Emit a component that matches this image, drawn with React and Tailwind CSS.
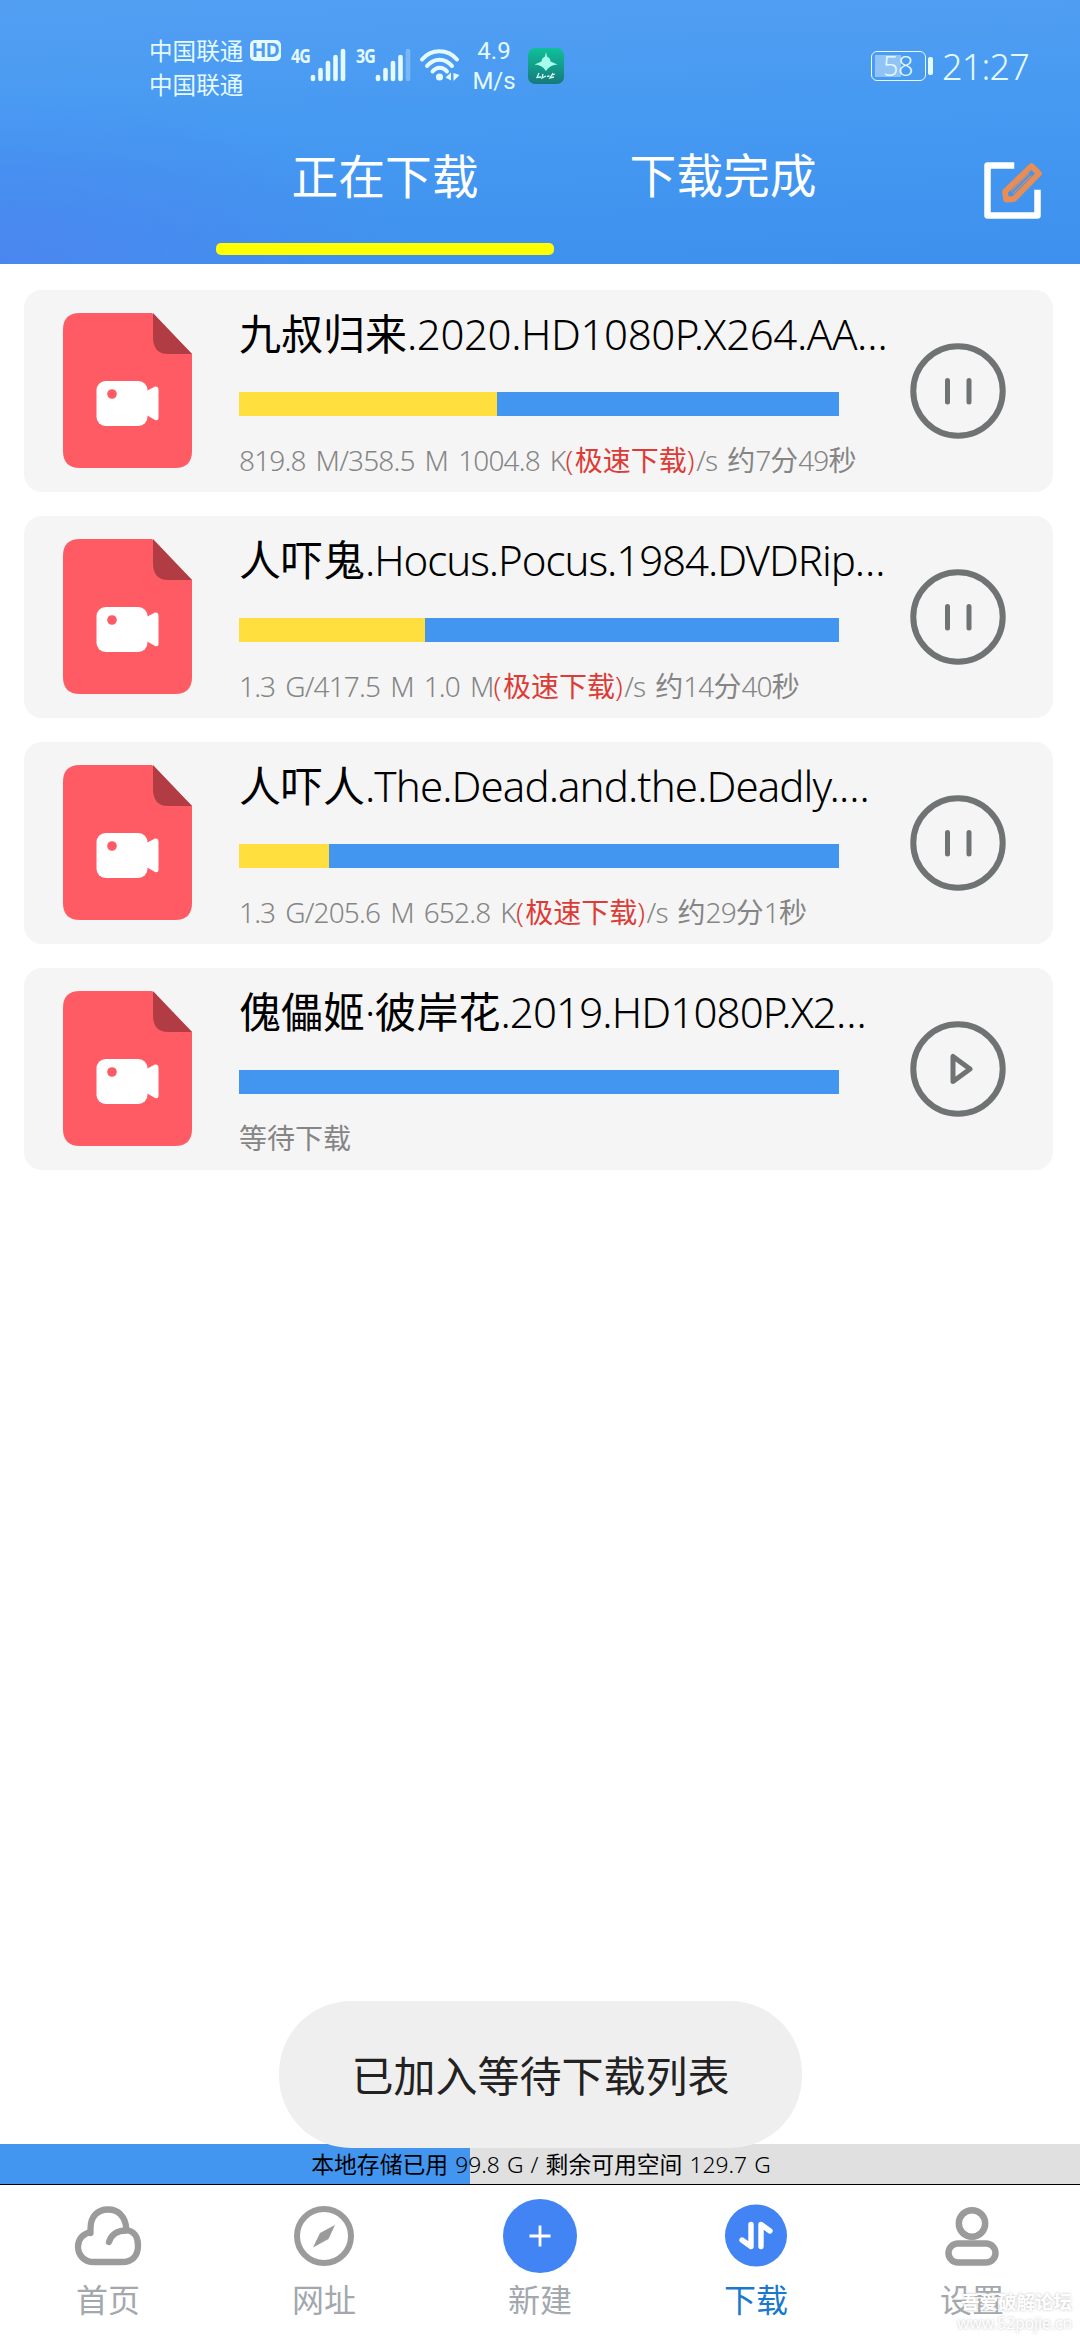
/**
 * Downloads screen
 * Active download tasks, local storage usage and the bottom navigation.
 */
import React from 'react';

const TASKS = [
    { name: '九叔归来.2020.HD1080P.X264.AA…', tracking: 'tracking-[-0.4px]', percent: 43, running: true, size: '819.8 M/358.5 M 1004.8 K', left: '/s 约7分49秒' },
    { name: '人吓鬼.Hocus.Pocus.1984.DVDRip…', tracking: 'tracking-[-1.05px]', percent: 31, running: true, size: '1.3 G/417.5 M 1.0 M', left: '/s 约14分40秒' },
    { name: '人吓人.The.Dead.and.the.Deadly.…', tracking: 'tracking-[-0.9px]', percent: 15, running: true, size: '1.3 G/205.6 M 652.8 K', left: '/s 约29分1秒' },
    { name: '傀儡姬·彼岸花.2019.HD1080P.X2…', tracking: 'tracking-[-0.85px]', percent: 0, running: false },
];

// Latin runs are set light, Chinese runs keep the regular weight
const Mixed = ({ text, className = '' }) => text.split(/([\u4e00-\u9fff]+)/).map((part, i) => (
    <span key={i} className={i % 2 ? 'font-normal' : `font-[260] ${className}`}>{part}</span>
));

const Signal = ({ label, level }) => (
    <div className="flex items-start">
        <span className="w-[19px] text-[20px] leading-[16px] font-bold tracking-tighter origin-left scale-x-[0.8] whitespace-nowrap">{label}</span>
        <svg className="w-9 h-[34px]" viewBox="0 0 36 34" stroke="currentColor" strokeWidth="4.6" strokeLinecap="round">
            {[29, 22, 15, 9, 3].map((y, i) => (
                <path key={y} d={`M${3 + i * 7.5} ${y}V31`} opacity={i < level ? 1 : 0.3} />
            ))}
        </svg>
    </div>
);

const StatusBar = () => (
    <div className="flex items-start h-[122px] pt-[34px] pl-[149px] pr-[51px] text-[#e4faff]">
        <div className="w-[101px] text-[23.6px] leading-[34px]">
            <div>中国联通</div>
            <div>中国联通</div>
        </div>
        <div className="mt-[6px] w-[31px] h-[21px] rounded-[5px] bg-[#e4faff] text-[#4d9bf2] text-[19px] leading-[21px] font-bold text-center tracking-tight">HD</div>
        <div className="mt-[14px] ml-[10px]"><Signal label="4G" level={5} /></div>
        <div className="mt-[14px] ml-[10px]"><Signal label="3G" level={4} /></div>
        <svg className="mt-[14px] ml-[8px] w-[41px] h-[35px]" viewBox="0 0 41 35" fill="none" stroke="currentColor" strokeWidth="4" strokeLinecap="round">
            <path d="M3 11.500C12 0.500 29 0.500 38 11.500" />
            <path d="M8 18C15 9.500 26 9.500 33 18" />
            <path d="M13.500 23.500C17.500 18.500 24 18.500 28 23.500" />
            <circle cx="20.500" cy="29" r="3.600" fill="currentColor" stroke="none" />
            <path d="M32 24.500V32.500L26.500 29.500ZM34.500 25V33L40.500 27Z" fill="currentColor" stroke="none" />
        </svg>
        <div className="mt-[2px] ml-[12px] w-[44px] text-center font-['Roboto'] text-[24px] leading-[30px]">
            <div>4.9</div>
            <div>M/s</div>
        </div>
        <svg className="mt-[14px] ml-[12px] w-9 h-9" viewBox="0 0 36 36">
            <defs>
                <linearGradient id="app" x1="0" y1="0" x2="0" y2="1">
                    <stop offset="0" stopColor="#0fc09a" />
                    <stop offset="1" stopColor="#157a7c" />
                </linearGradient>
            </defs>
            <rect width="36" height="36" rx="7" fill="url(#app)" />
            <path d="M18 4L19 8.500Q22.500 10 22.500 13.500L29.500 16.500Q22 16.500 18 23Q14 16.500 6.500 16.500L13.500 13.500Q13.500 10 17 8.500Z" fill="#a5ffec" />
            <path d="M11 25L9 29.500L13 29M15 26L14 30L18 28M19 28.500L21.500 28M25 25L22 30L26 29M24 27L27 26" fill="none" stroke="#d7fff5" strokeWidth="1.300" />
        </svg>
        <div className="flex-1" />
        <div className="flex items-center mt-[17px]">
            <div className="flex items-center w-[55px] h-[30px] p-[3px] rounded-[6px] border-[1.500px] border-current">
                <div className="w-[26px] h-full bg-white/40" />
                <span className="-ml-[18px] text-[27px] leading-[24px] font-light tracking-[-0.5px]">58</span>
            </div>
            <div className="ml-[2px] w-[5px] h-[18px] rounded-[2px] bg-current" />
        </div>
        <span className="mt-[8px] ml-[9px] text-[36px] leading-[50px] font-light tracking-[-0.8px]">21:27</span>
    </div>
);

const Header = () => (
    <header className="h-[264px] bg-[radial-gradient(ellipse_420px_170px_at_0%_100%,#4b86f0_0%,#4b86f000_100%),linear-gradient(178deg,#529ff3_0%,#4599f1_50%,#3d90ed_100%)]">
        <StatusBar />
        <div className="flex pl-[216px] h-[142px]">
            <div className="w-[338px] flex flex-col justify-between pb-[9px]">
                <span className="pt-[23px] text-center text-[46.8px] leading-[62px] text-white">正在下载</span>
                <div className="h-[12px] rounded-[5px] bg-[#ffff00]" />
            </div>
            <div className="w-[338px] pt-[22px] text-center text-[46.8px] leading-[62px] text-white">下载完成</div>
            <svg className="mt-[39px] ml-[90px] w-[60px] h-[60px]" viewBox="0 0 60 60" fill="none">
                <path d="M29 4.500H5.500V54.500H55.500V32" stroke="#fff" strokeWidth="6.500" strokeLinejoin="round" strokeLinecap="square" />
                <path d="M49.500 5L57 12.500L32 38L24 38.500L23 30.500Z" stroke="#e78d55" strokeWidth="5.800" strokeLinejoin="round" />
                <path d="M48 13.500L30 31.500" stroke="#e78d55" strokeWidth="4" />
                <path d="M48.500 13L28.500 33" stroke="#4a93e6" strokeWidth="2" strokeLinecap="round" />
            </svg>
        </div>
    </header>
);

const VideoFileIcon = () => (
    <svg className="w-[129px] h-[155px]" viewBox="0 0 129 155">
        <path d="M17 0H89L129 41V138Q129 155 112 155H17Q0 155 0 138V17Q0 0 17 0Z" fill="#ff5b64" />
        <path d="M90 0L129 41H105Q90 41 90 24Z" fill="#b23c43" />
        <rect x="33.500" y="68" width="51" height="45" rx="9" fill="#fff" />
        <path d="M83.500 78L92 73.500Q95.500 73 95.500 77V105Q95.500 108 92 107L83.500 102Z" fill="#fff" />
        <circle cx="49" cy="81" r="4.800" fill="#ff5b64" />
    </svg>
);

const ToggleIcon = ({ running }) => (
    <svg className="w-24 h-24" viewBox="0 0 96 96" fill="none" stroke="#707374" strokeLinecap="round" strokeLinejoin="round">
        <circle cx="48" cy="48" r="44.700" strokeWidth="6" />
        {running
            ? <path d="M37.500 37.500V59M59 37.500V59" strokeWidth="5" />
            : <path d="M43 35.500V60.500L60 48Z" strokeWidth="5" />}
    </svg>
);

const TaskCard = ({ task }) => (
    <div className="flex h-[202px] pl-[38.5px] rounded-[18px] bg-[#f5f5f5]">
        <div className="w-[176.5px] pt-[23px]"><VideoFileIcon /></div>
        <div className="w-[671px] pt-[12px] whitespace-nowrap">
            <div className="text-[42px] leading-[64px] text-black"><Mixed text={task.name} className={task.tracking} /></div>
            <div className="mt-[26px] w-[600px] h-[24px] bg-[#4396ef]">
                <div className="h-full bg-[#ffdf3e]" style={{ width: `${task.percent}%` }} />
            </div>
            <div className="mt-[24px] text-[28px] leading-[40px] text-[#858585] [word-spacing:3.6px]">
                {task.size ? (
                    <>
                        <Mixed text={task.size} className="tracking-[-0.85px]" />
                        <span className="text-[#dc3c35]"><Mixed text="(极速下载)" className="tracking-[1.5px]" /></span>
                        <Mixed text={task.left} className="tracking-[-0.9px]" />
                    </>
                ) : '等待下载'}
            </div>
        </div>
        <button className="self-start mt-[53px]"><ToggleIcon running={task.running} /></button>
    </div>
);

const StorageBar = () => (
    <div className="relative h-[41px] bg-[#e0e0e0] border-b-[1px] border-black">
        <div className="w-[470px] h-full bg-[#4396ef]" />
        <div className="absolute inset-0 pl-[2px] text-center text-[22.8px] leading-[41px] text-black [word-spacing:1.2px]">
            <Mixed text="本地存储已用 99.8 G / 剩余可用空间 129.7 G" />
        </div>
    </div>
);

const NAV = [
    {
        label: '首页',
        icon: (
            <g fill="none" stroke="#9b9b9b" strokeWidth="6.300" strokeLinecap="round" strokeLinejoin="round">
                <path d="M19.500 34V29.500C19.500 17 27 10.500 37 10.500S54.500 17 55.500 31C63 32 67 38 67 46.500C67 57 61 63 51 63H23C13 63 7 56 7 47.500C7 40 12 35 19.500 33" />
                <path d="M38 43C40 36 46 31.500 55 31.500" />
            </g>
        ),
    },
    {
        label: '网址',
        icon: (
            <g>
                <circle cx="37" cy="37" r="27" fill="none" stroke="#9b9b9b" strokeWidth="6" />
                <path d="M48 26L41.500 40L26 48.500L33 34Z" fill="#9b9b9b" />
            </g>
        ),
    },
    {
        label: '新建',
        icon: (
            <g>
                <circle cx="37" cy="37" r="37" fill="#4284f3" />
                <path d="M37 26.500V47.500M26.500 37H47.500" stroke="#fff" strokeWidth="2.800" />
            </g>
        ),
    },
    {
        label: '下载',
        active: true,
        icon: (
            <g>
                <circle cx="37" cy="36.500" r="31" fill="#4284f3" />
                <path d="M32 25.500V47.500L23 41M42 47.500V25.500L51 32" fill="none" stroke="#fff" strokeWidth="5.400" strokeLinecap="round" strokeLinejoin="round" />
            </g>
        ),
    },
    {
        label: '设置',
        icon: (
            <g fill="none" stroke="#9b9b9b" strokeWidth="6.500">
                <circle cx="37" cy="24.500" r="13.200" />
                <rect x="13.500" y="44.500" width="47" height="19" rx="9.500" />
            </g>
        ),
    },
];

const BottomNav = () => (
    <nav className="flex h-[155px] pt-[14px] bg-white">
        {NAV.map(({ label, icon, active }) => (
            <div key={label} className="w-[216px] flex flex-col items-center">
                <svg className="w-[74px] h-[74px]" viewBox="0 0 74 74">{icon}</svg>
                <span className={`mt-[5px] text-[32px] leading-[44px] ${active ? 'text-[#1b78cc]' : 'text-[#a3a8ae]'}`}>{label}</span>
            </div>
        ))}
    </nav>
);

const App = () => (
    <div className="relative flex flex-col w-[1080px] h-[2340px] overflow-hidden bg-white font-['Noto_Sans','Noto_Sans_CJK_SC',sans-serif]">
        <Header />
        <main className="flex-1 flex flex-col gap-6 pt-[26px] pl-[24px] pr-[27px]">
            {TASKS.map((task) => <TaskCard key={task.name} task={task} />)}
        </main>
        <StorageBar />
        <BottomNav />

        {/* Toast */}
        <div className="absolute left-[279px] top-[2001px] w-[523px] h-[147px] rounded-[72px] bg-[#efefef] text-center text-[42px] leading-[149px] text-[#222]">
            已加入等待下载列表
        </div>

        {/* Watermark */}
        <div className="absolute right-[8px] bottom-[8px] text-right text-white [text-shadow:0_0_3px_#bbb]">
            <div className="text-[18.5px] leading-[24px] font-bold">吾爱破解论坛</div>
            <div className="text-[15.5px] leading-[18px]">www.52pojie.cn</div>
        </div>
    </div>
);

export default App;
